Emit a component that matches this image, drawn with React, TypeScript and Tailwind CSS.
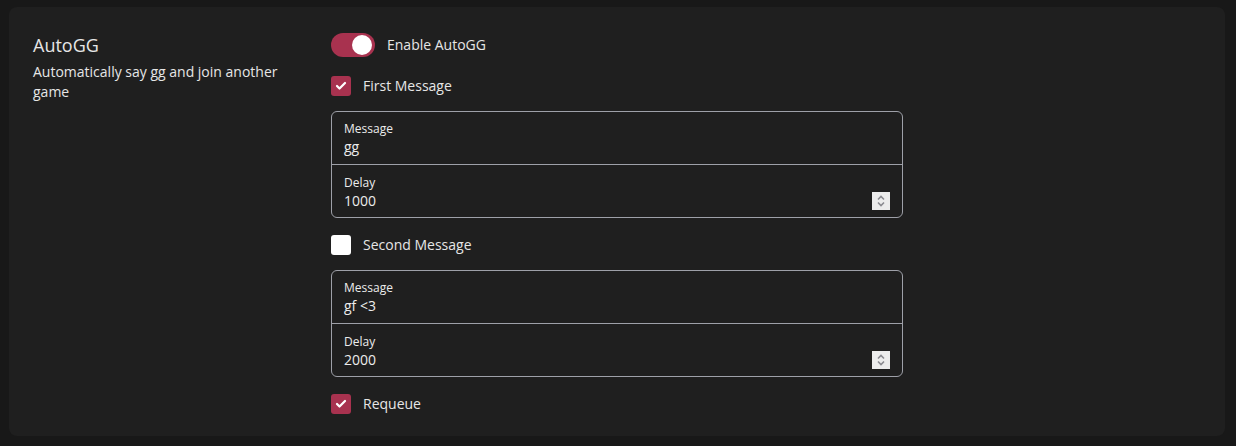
import { Check } from "lucide-react";

const font = { fontFamily: '"Open Sans", "Noto Sans", sans-serif' };

function Toggle({ label }: { label: string }) {
  return (
    <div className="flex items-center h-6">
      <div className="relative w-11 h-6 rounded-full bg-[#a8324f]">
        <div className="absolute right-[3px] top-[2px] w-5 h-5 rounded-full bg-white" />
      </div>
      <span className="ml-3 text-sm text-[#e6e6e6]">{label}</span>
    </div>
  );
}

function CheckRow({ label, checked }: { label: string; checked: boolean }) {
  return (
    <div className="flex items-center h-5">
      {checked ? (
        <div className="w-5 h-5 rounded-[3px] bg-[#a8324f] flex items-center justify-center">
          <Check className="w-3 h-3 text-white" strokeWidth={4.5} />
        </div>
      ) : (
        <div className="w-5 h-5 rounded-[3px] bg-white" />
      )}
      <span className="ml-3 text-sm text-[#e6e6e6]">{label}</span>
    </div>
  );
}

function Spinner() {
  return (
    <div className="w-[18px] h-[18px] bg-[#ececec] flex items-center justify-center">
      <svg width="10" height="14" viewBox="0 0 10 14" fill="none" stroke="#8a8a90" strokeWidth="1.6">
        <path d="M2 5.5 L5 2.5 L8 5.5" />
        <path d="M2 8.5 L5 11.5 L8 8.5" />
      </svg>
    </div>
  );
}

function MessageGroup({ message, delay }: { message: string; delay: string }) {
  return (
    <div className="w-[572px] rounded-md border border-[#9ea0a8]">
      <div className="pl-3 pr-3 pt-[9px] pb-[7px] border-b border-[#9ea0a8]">
        <div className="text-xs leading-4 text-[#ececec]">Message</div>
        <div className="text-sm leading-5 text-[#ececec]">{message}</div>
      </div>
      <div className="pl-3 pr-3 pt-[10px] pb-[6px]">
        <div className="text-xs leading-4 text-[#ececec]">Delay</div>
        <div className="flex items-center justify-between">
          <span className="text-sm leading-5 text-[#ececec]">{delay}</span>
          <Spinner />
        </div>
      </div>
    </div>
  );
}

export default function App() {
  return (
    <div className="w-[1236px] h-[446px] bg-[#181818] pl-[9px] pt-[7px]" style={font}>
      <div className="w-[1216px] h-[429px] rounded-lg bg-[#1f1f1f] pl-6 pt-[26px] flex">
        <div className="w-[298px] shrink-0">
          <div className="text-lg leading-6 text-[#e6e6e6]">AutoGG</div>
          <div className="mt-[5px] w-[260px] text-sm leading-5 text-[#e6e6e6]">
            Automatically say gg and join another game
          </div>
        </div>
        <div className="flex flex-col">
          <Toggle label="Enable AutoGG" />
          <div className="mt-[19px]">
            <CheckRow label="First Message" checked />
          </div>
          <div className="mt-[15px]">
            <MessageGroup message="gg" delay="1000" />
          </div>
          <div className="mt-[17px]">
            <CheckRow label="Second Message" checked={false} />
          </div>
          <div className="mt-[15px]">
            <MessageGroup message="gf <3" delay="2000" />
          </div>
          <div className="mt-[17px]">
            <CheckRow label="Requeue" checked />
          </div>
        </div>
      </div>
    </div>
  );
}
